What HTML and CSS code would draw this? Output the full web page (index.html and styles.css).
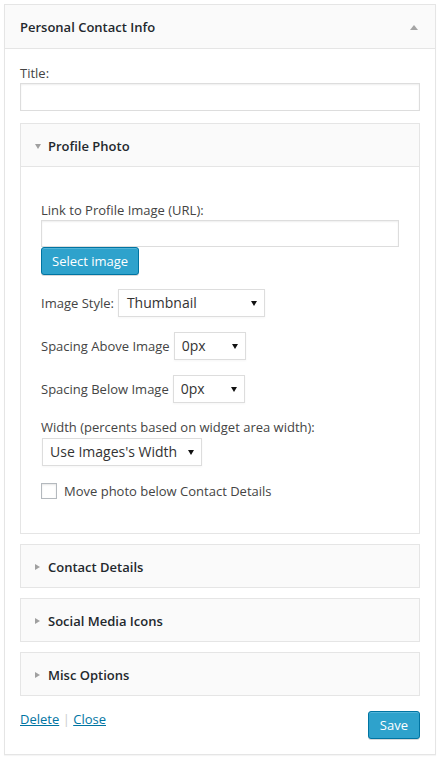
FILE: index.html
```html
<!DOCTYPE html>
<html>
<head>
<meta charset="utf-8">
<link rel="stylesheet" href="styles.css">
</head>
<body>
<div class="widget">
  <div class="widget-top">
    <h3 class="widget-title">Personal Contact Info</h3>
    <svg class="arrow-up" width="8" height="5" viewBox="0 0 8 5"><path d="M4 0L8 5H0Z" fill="#a5a5a5"/></svg>
  </div>
  <div class="widget-inside">
    <label class="lbl">Title:</label>
    <div class="input"></div>

    <div class="section open">
      <div class="section-head">
        <svg class="tri" width="6" height="5" viewBox="0 0 6 5"><path d="M0 0H6L3 5Z" fill="#a0a0a0"/></svg>
        <span>Profile Photo</span>
      </div>
      <div class="section-body">
        <label class="lbl">Link to Profile Image (URL):</label>
        <div class="input url"></div>
        <div class="btn">Select image</div>

        <div class="row first">
          <span class="lbl-inline">Image Style:</span>
          <div class="select w-style"><span>Thumbnail</span><svg width="6" height="5" viewBox="0 0 6 5"><path d="M0 0H6L3 5Z" fill="#111"/></svg></div>
        </div>
        <div class="row">
          <span class="lbl-inline">Spacing Above Image</span>
          <div class="select w-px"><span>0px</span><svg width="6" height="5" viewBox="0 0 6 5"><path d="M0 0H6L3 5Z" fill="#111"/></svg></div>
        </div>
        <div class="row">
          <span class="lbl-inline">Spacing Below Image</span>
          <div class="select w-px"><span>0px</span><svg width="6" height="5" viewBox="0 0 6 5"><path d="M0 0H6L3 5Z" fill="#111"/></svg></div>
        </div>

        <label class="lbl width-lbl">Width (percents based on widget area width):</label>
        <div class="select w-width"><span>Use Images's Width</span><svg width="6" height="5" viewBox="0 0 6 5"><path d="M0 0H6L3 5Z" fill="#111"/></svg></div>

        <div class="check-row">
          <span class="checkbox"></span>
          <span class="check-lbl">Move photo below Contact Details</span>
        </div>
      </div>
    </div>

    <div class="section closed">
      <div class="section-head">
        <svg class="tri" width="5" height="6" viewBox="0 0 5 6"><path d="M0 0L5 3L0 6Z" fill="#a0a0a0"/></svg>
        <span>Contact Details</span>
      </div>
    </div>
    <div class="section closed">
      <div class="section-head">
        <svg class="tri" width="5" height="6" viewBox="0 0 5 6"><path d="M0 0L5 3L0 6Z" fill="#a0a0a0"/></svg>
        <span>Social Media Icons</span>
      </div>
    </div>
    <div class="section closed">
      <div class="section-head">
        <svg class="tri" width="5" height="6" viewBox="0 0 5 6"><path d="M0 0L5 3L0 6Z" fill="#a0a0a0"/></svg>
        <span>Misc Options</span>
      </div>
    </div>

    <div class="footer">
      <div class="links"><a href="#">Delete</a> <span class="sep">|</span> <a href="#">Close</a></div>
      <div class="btn save">Save</div>
    </div>
  </div>
</div>
</body>
</html>
```

FILE: styles.css
```css
html, body {
  margin: 0;
  padding: 0;
  background: #fff;
}
body {
  padding: 4px;
  font-family: "Open Sans", "Liberation Sans", sans-serif;
  font-size: 13px;
  line-height: 18px;
  color: #444;
}
.widget {
  width: 432px;
  box-sizing: border-box;
  border: 1px solid #e5e5e5;
  background: #fff;
  box-shadow: 0 1px 1px rgba(0,0,0,0.04);
}
.widget-top {
  height: 43px;
  background: #fafafa;
  border-bottom: 1px solid #e5e5e5;
  display: flex;
  align-items: center;
  justify-content: space-between;
  padding: 0 17px 0 15px;
}
.widget-title {
  margin: 0;
  font-size: 13px;
  font-weight: 600;
  color: #23282d;
  line-height: 18px;
}
.arrow-up {
  display: block;
  margin-top: 1px;
}
.widget-inside {
  padding: 15px 15px 15px;
}
.lbl {
  display: block;
  line-height: 18px;
  margin-bottom: 1px;
}
.input {
  height: 28px;
  box-sizing: border-box;
  border: 1px solid #ddd;
  background: #fff;
  box-shadow: inset 0 1px 2px rgba(0,0,0,0.07);
}
.section {
  border: 1px solid #e5e5e5;
  margin-top: 10px;
  background: #fff;
}
.widget-inside > .input + .section {
  margin-top: 12px;
}
.section-head {
  height: 42px;
  box-sizing: border-box;
  padding: 2px 14px 0;
  background: #fafafa;
  display: flex;
  align-items: center;
  font-weight: 600;
  color: #23282d;
}
.section-head .tri {
  display: block;
  margin-right: 7px;
}
.closed .section-head .tri {
  margin-right: 8px;
}
.section.open .section-head {
  border-bottom: 1px solid #e5e5e5;
  height: 43px;
}
.section-body {
  padding: 34px 20px 33px;
}
.input.url {
  height: 27px;
}
.btn {
  display: inline-flex;
  align-items: center;
  height: 28px;
  box-sizing: border-box;
  padding: 0 10px;
  background: #2ea2cc;
  border: 1px solid #0074a2;
  border-radius: 3px;
  color: #fff;
  box-shadow: inset 0 1px 0 rgba(120,200,230,0.5), 0 1px 0 rgba(0,0,0,0.15);
  font-size: 13px;
  vertical-align: top;
}
.row {
  display: flex;
  align-items: center;
  margin-top: 15px;
}
.row.first {
  margin-top: 14px;
}
.lbl-inline {
  margin-right: 4px;
}
.select {
  display: flex;
  align-items: center;
  justify-content: space-between;
  height: 28px;
  box-sizing: border-box;
  border: 1px solid #ddd;
  background: #fff;
  padding: 0 7px 0 7px;
  font-size: 14px;
  color: #333;
  box-shadow: 0 1px 2px rgba(0,0,0,0.04);
}
.select svg {
  display: block;
}
.w-style { width: 147px; padding-left: 8px; }
.w-px { width: 72px; }
.w-width { width: 160px; margin-left: 1px; }
.width-lbl {
  margin-top: 15px;
  margin-bottom: 2px;
}
.check-row {
  display: flex;
  align-items: center;
  margin-top: 16px;
}
.checkbox {
  width: 16px;
  height: 16px;
  box-sizing: border-box;
  border: 1px solid #b4b9be;
  background: #fff;
  box-shadow: inset 0 1px 2px rgba(0,0,0,0.1);
  margin-right: 7px;
}
.footer {
  display: flex;
  justify-content: space-between;
  align-items: flex-start;
  margin-top: 15px;
}
.links {
  line-height: 18px;
  margin-top: -1px;
}
.links a {
  color: #0074a2;
  text-decoration: underline;
}
.sep {
  color: #ccc;
}
.btn.save {
  padding: 0 11px 0 11px;
}
```
